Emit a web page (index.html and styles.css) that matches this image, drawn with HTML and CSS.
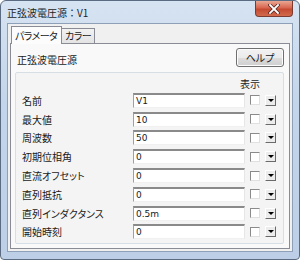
FILE: index.html
```html
<!DOCTYPE html>
<html lang="ja">
<head>
<meta charset="utf-8">
<link rel="stylesheet" href="styles.css">
</head>
<body>
<div class="window">
  <div class="titlebar">
    <span class="title">正弦波電圧源：V1</span>
    <span class="close"><svg width="12" height="10" viewBox="0 0 12 10"><path d="M2 1 L10 9 M10 1 L2 9" stroke="#5a2a24" stroke-width="3.4" stroke-linecap="square"/><path d="M2 1 L10 9 M10 1 L2 9" stroke="#fff" stroke-width="1.8" stroke-linecap="square"/></svg></span>
  </div>
  <div class="client">
    <div class="tabs">
      <span class="tab active">パラメータ</span>
      <span class="tab">カラー</span>
    </div>
    <div class="panel">
      <div class="panel-head">
        <span class="heading">正弦波電圧源</span>
        <span class="button">ヘルプ</span>
      </div>
      <div class="group">
        <div class="grid">
          <span class="show">表示</span>
          <span class="label">名前</span><span class="input">V1</span><span class="check"></span><span class="drop"></span>
          <span class="label">最大値</span><span class="input">10</span><span class="check"></span><span class="drop"></span>
          <span class="label">周波数</span><span class="input">50</span><span class="check"></span><span class="drop"></span>
          <span class="label">初期位相角</span><span class="input">0</span><span class="check"></span><span class="drop"></span>
          <span class="label">直流オフセット</span><span class="input">0</span><span class="check"></span><span class="drop"></span>
          <span class="label">直列抵抗</span><span class="input">0</span><span class="check"></span><span class="drop"></span>
          <span class="label">直列インダクタンス</span><span class="input">0.5m</span><span class="check"></span><span class="drop"></span>
          <span class="label">開始時刻</span><span class="input">0</span><span class="check"></span><span class="drop"></span>
        </div>
      </div>
    </div>
  </div>
</div>
</body>
</html>
```
FILE: styles.css
```css
* { box-sizing: border-box; }
html, body { margin: 0; padding: 0; background: #ffffff; }
body { font-family: "Noto Sans CJK JP", "Noto Sans", sans-serif; font-size: 10px; color: #1a1a1a; font-feature-settings: "palt"; }
.window {
  width: 300px; height: 260px;
  border: 1px solid #5b6c82;
  border-radius: 6px 6px 4px 4px;
  background: linear-gradient(180deg, #d6e3f2 0%, #c3d5ea 40%, #bccfe6 100%);
  display: flex; flex-direction: column;
  padding: 0 6px 7px 6px;
}
.titlebar { height: 22px; display: flex; align-items: flex-start; justify-content: space-between; }
.title { font-size: 10px; line-height: 23px; color: #1e1e1e; font-feature-settings: normal; }
.close {
  width: 38px; height: 16px;
  border: 1px solid #7a3b33; border-top: none;
  border-radius: 0 0 4px 4px;
  background: linear-gradient(180deg, #e9a894 0%, #d8664f 45%, #c44a32 55%, #d36a4c 100%);
  display: flex; align-items: center; justify-content: center;
}
.client {
  flex: 1; background: #f0f0f0;
  border: 1px solid #8da0b7;
  display: flex; flex-direction: column;
  padding: 2px 2px 2px 2px;
}
.tabs { display: flex; align-items: flex-end; height: 17px; padding-left: 1px; position: relative; z-index: 1; }
.tab {
  font-size: 10px; height: 15px; line-height: 14px; padding: 0 3px;
  border: 1px solid #898c95; border-bottom: none;
  background: linear-gradient(180deg, #f2f2f2, #e3e3e3);
  margin-left: -1px; letter-spacing: -0.6px;
}
.tab.active { height: 18px; line-height: 17px; background: #fcfcfc; padding: 0 4px 0 3px; margin-bottom: -1px; margin-left: 0; }
.panel {
  flex: 1; border: 1px solid #898c95; background: #f9f9f9;
  padding: 4px 5px 4px 4px;
  display: flex; flex-direction: column;
}
.panel-head { display: flex; justify-content: space-between; align-items: center; height: 19px; padding-left: 2px; }
.heading { font-size: 10px; padding-top: 3px; }
.button {
  width: 48px; height: 19px;
  border: 1px solid #707070; border-radius: 3px;
  background: linear-gradient(180deg, #f2f2f2 0%, #ebebeb 50%, #dddddd 51%, #cfcfcf 100%);
  box-shadow: inset 0 0 0 1px #fcfcfc;
  font-size: 10px; display: flex; align-items: center; justify-content: center;
}
.group {
  flex: 1; margin-top: 5px;
  border: 1px solid #d5dfe5; border-radius: 2px;
  background: #f4f4f4;
  padding: 2px 6px 0 6px;
}
.grid {
  display: grid;
  grid-template-columns: 106px 112px 10px 11px;
  column-gap: 5px;
  grid-template-rows: 16px;
  grid-auto-rows: 18.8px;
  align-items: center;
}
.show { grid-column: 3 / 5; justify-self: start; margin-left: -10px; font-size: 10px; }
.label { font-size: 10px; }
.input {
  height: 15px; background: #fff;
  border-top: 2px solid #8a8a8a; border-left: 1px solid #a0a0a0;
  border-right: 1px solid #e6e6e6; border-bottom: 1px solid #f0f0f0;
  font-family: "DejaVu Sans", sans-serif; font-size: 9px; line-height: 12px; padding-left: 2px;
}
.check {
  width: 10px; height: 10px; background: #fff;
  border-top: 1px solid #8a8a8a; border-left: 1px solid #8a8a8a;
  border-right: 1px solid #e0e0e0; border-bottom: 1px solid #e0e0e0;
}
.drop {
  width: 11px; height: 11px; background: #ececec;
  border-top: 1px solid #ffffff; border-left: 1px solid #ffffff;
  border-right: 1px solid #6a6a6a; border-bottom: 1px solid #6a6a6a;
  position: relative;
}
.drop::after {
  content: ""; position: absolute; left: 2px; top: 3px;
  border-left: 3px solid transparent; border-right: 3px solid transparent;
  border-top: 3px solid #000;
}
```
